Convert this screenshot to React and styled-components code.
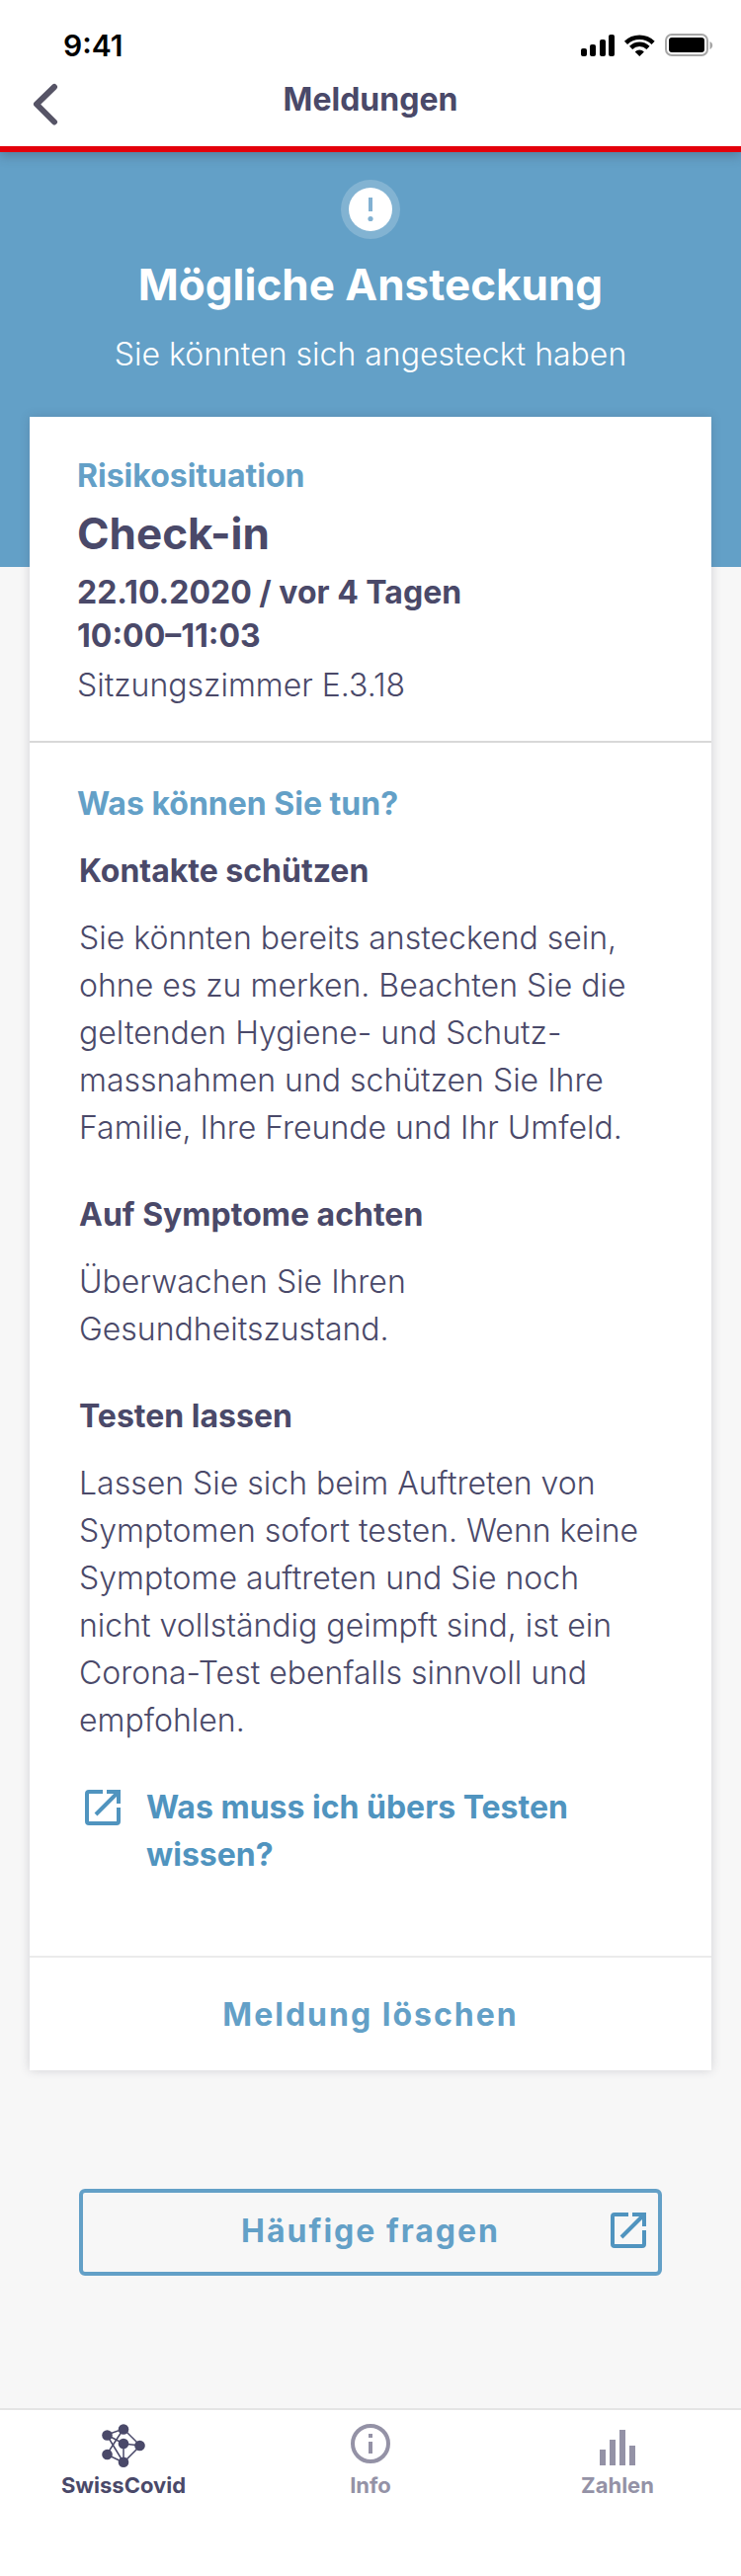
import React from "react";
import styled, { createGlobalStyle } from "styled-components";

const c = {
  ink: "#4a4969",
  muted: "#9492a6",
  blue: "#63a0c7",
  link: "#5094bf",
  red: "#e3000b",
  page: "#f7f7f7",
};

const Global = createGlobalStyle`
  * { box-sizing: border-box; }
  html, body, #root { min-height: 100%; }
  body {
    margin: 0;
    background: ${c.page};
    color: ${c.ink};
    font-family: Inter, "Liberation Sans", sans-serif;
    font-size: 32px;
  }
  h1, h2, h3, p { margin: 0; }
  button { font: inherit; background: none; border: 0; padding: 0; cursor: pointer; }
  a { text-decoration: none; color: inherit; }
  svg { display: block; flex: none; }
`;

const Page = styled.div`
  display: flex;
  flex-direction: column;
  min-height: 100vh;
`;

const Header = styled.header`
  position: relative;
  z-index: 1;
  background: #fff;
  border-bottom: 6px solid ${c.red};
  box-shadow: 0 4px 10px rgba(60, 60, 80, 0.35);
`;

const StatusBar = styled.div`
  display: flex;
  justify-content: space-between;
  align-items: center;
  height: 76px;
  padding: 16px 28px 0 64px;
`;

const Time = styled.time`
  color: #000;
  font-size: 30px;
  line-height: 36px;
  font-weight: 600;
`;

const StatusIcons = styled.div`
  display: flex;
  align-items: center;
`;

const NavBar = styled.div`
  display: grid;
  grid-template-columns: 1fr auto 1fr;
  height: 72px;
  padding: 0 32px;
`;

const BackButton = styled.button`
  justify-self: start;
  align-self: start;
  padding-top: 8px;
`;

const NavTitle = styled.h1`
  font-size: 32px;
  line-height: 50px;
  font-weight: 700;
`;

const Main = styled.main`
  flex: 1;
  display: flex;
  flex-direction: column;
  padding: 0 30px 134px;
  background: linear-gradient(${c.blue} 420px, ${c.page} 420px);
`;

const Hero = styled.section`
  display: flex;
  flex-direction: column;
  align-items: center;
  height: 268px;
  padding-top: 28px;
  color: #fff;
  text-align: center;
`;

const HeroTitle = styled.h2`
  margin-top: 20px;
  font-size: 44px;
  line-height: 52px;
  font-weight: 700;
`;

const HeroText = styled.p`
  margin-top: 20px;
  line-height: 50px;
  font-weight: 300;
`;

const Card = styled.article`
  background: #fff;
  box-shadow: 0 0 10px rgba(60, 60, 80, 0.2);
`;

const CardSection = styled.section`
  padding: ${(p) => (p.$soft ? "40px 48px 32px" : "38px 48px 32px")};
  border-bottom: 2px solid ${(p) => (p.$soft ? "#ebebeb" : "#d8d8d8")};
`;

const Eyebrow = styled.h2`
  color: ${c.blue};
  font-size: 32px;
  line-height: 44px;
  font-weight: 700;
`;

const EventTitle = styled.h3`
  margin: 8px 0 10px;
  font-size: 44px;
  line-height: 56px;
  font-weight: 700;
`;

const EventTime = styled.p`
  line-height: 44px;
  font-weight: 700;
`;

const EventPlace = styled.p`
  margin-top: 4px;
  line-height: 48px;
  font-weight: 300;
`;

const Advice = styled.div`
  padding: 0 16px 0 2px;
  margin-top: ${(p) => (p.$first ? 22 : 40)}px;
`;

const AdviceTitle = styled.h3`
  font-size: 32px;
  line-height: 48px;
  font-weight: 700;
`;

const AdviceText = styled.p`
  margin-top: 20px;
  line-height: 48px;
  font-weight: 300;
`;

const TestLink = styled.a`
  display: flex;
  align-items: flex-start;
  gap: 26px;
  padding: 0 8px;
  margin: 40px 0 46px;
  color: ${c.link};
  line-height: 48px;
  font-weight: 700;

  svg { margin-top: 6px; }
`;

const DeleteButton = styled.button`
  display: block;
  width: 100%;
  padding: 34px 0 32px;
  color: ${c.blue};
  line-height: 48px;
  font-weight: 700;
  letter-spacing: 2px;
`;

const FaqButton = styled.a`
  display: grid;
  grid-template-columns: 1fr auto 1fr;
  align-items: center;
  height: 88px;
  margin: 120px 50px 0;
  padding: 0 12px 4px;
  border: 4px solid ${c.blue};
  border-radius: 6px;
  color: ${c.blue};
  font-weight: 700;
  letter-spacing: 2px;

  svg { grid-column: 3; justify-self: end; color: ${c.link}; }
  span { grid-column: 2; }
`;

const TabBar = styled.nav`
  display: grid;
  grid-template-columns: repeat(3, 1fr);
  height: 170px;
  padding-top: 12px;
  background: #fff;
  border-top: 2px solid #e5e5e5;
`;

const Tab = styled.a`
  display: flex;
  flex-direction: column;
  align-items: center;
  color: ${(p) => (p.$active ? c.ink : c.muted)};
  font-size: 22px;
  line-height: 32px;
  font-weight: 700;
`;

const TabIcon = styled.span`
  display: flex;
  align-items: center;
  height: 48px;
`;

const Signal = () => (
  <svg width="34" height="22" viewBox="0 0 34 22" aria-hidden="true">
    <rect x="0" y="14" width="6" height="8" rx="2" />
    <rect x="9" y="10" width="6" height="12" rx="2" />
    <rect x="19" y="5" width="6" height="17" rx="2" />
    <rect x="28" y="0" width="6" height="22" rx="2" />
  </svg>
);

const Wifi = () => (
  <svg width="51" height="22" viewBox="0 0 51 22" aria-hidden="true">
    <g fill="none" stroke="#000" strokeWidth="4.4">
      <path d="M11.5 8.4a19.5 19.5 0 0 1 27.6 0" />
      <path d="M16.6 13.4a12.3 12.3 0 0 1 17.4 0" />
    </g>
    <path d="M25.3 22l-4.6-4.6a6.5 6.5 0 0 1 9.2 0z" />
  </svg>
);

const Battery = () => (
  <svg width="49" height="24" viewBox="0 0 49 24" aria-hidden="true">
    <rect x="1" y="1" width="42" height="21" rx="6" fill="none" stroke="#a6a6a6" strokeWidth="2" />
    <rect x="4" y="4" width="36" height="15" rx="3" />
    <path d="M45.500 8v8c1.600-.7 2.700-2.300 2.700-4s-1.100-3.300-2.700-4z" fill="#a6a6a6" />
  </svg>
);

const Chevron = () => (
  <svg width="28" height="44" viewBox="0 0 28 44" aria-hidden="true">
    <path d="M23 4L5 21.500 23 39.500" fill="none" stroke="#565466" strokeWidth="6" strokeLinecap="round" strokeLinejoin="round" />
  </svg>
);

const Alert = () => (
  <svg width="60" height="60" viewBox="0 0 60 60" aria-hidden="true">
    <circle cx="30" cy="30" r="30" fill="#fff" fillOpacity=".2" />
    <circle cx="30" cy="30" r="22" fill="#fff" />
    <rect x="28" y="18" width="4" height="14" fill="#82b1d2" />
    <circle cx="30" cy="39.500" r="2.600" fill="#82b1d2" />
  </svg>
);

const External = () => (
  <svg width="36" height="36" viewBox="0 0 36 36" aria-hidden="true">
    <path d="M18 2H4a2 2 0 0 0-2 2v28a2 2 0 0 0 2 2h28a2 2 0 0 0 2-2V18M22 2h12v12M33 3L11 25" fill="none" stroke="currentColor" strokeWidth="4" />
  </svg>
);

const Network = () => (
  <svg width="44" height="44" viewBox="0 0 44 44" aria-hidden="true">
    <path d="M5 11L22 5 39 22 22 39 5 31 22 5M5 11L22 39V20L5 11M22 20l17 2" fill="none" stroke="currentColor" strokeWidth="1.500" />
    <g fill="currentColor">
      <circle cx="22" cy="5.500" r="5.300" />
      <circle cx="5.500" cy="11.500" r="5.300" />
      <circle cx="22" cy="20" r="5.300" />
      <circle cx="38.500" cy="22" r="5.300" />
      <circle cx="5.500" cy="31" r="5.300" />
      <circle cx="22" cy="38.700" r="5.300" />
    </g>
  </svg>
);

const Info = () => (
  <svg width="40" height="44" viewBox="0 0 40 44" aria-hidden="true">
    <circle cx="20" cy="20" r="18" fill="none" stroke="currentColor" strokeWidth="4" />
    <path d="M18 10h4v4h-4zM18 18h4v12h-4z" fill="currentColor" />
  </svg>
);

const Chart = () => (
  <svg width="36" height="40" viewBox="0 -4 36 40" aria-hidden="true">
    <path d="M0 20h6v16H0zM10 10h6v26h-6zM20 0h6v36h-6zM30 16h6v20h-6z" fill="currentColor" />
  </svg>
);

const tabs = [
  { label: "SwissCovid", Icon: Network, active: true },
  { label: "Info", Icon: Info },
  { label: "Zahlen", Icon: Chart },
];

export default function App() {
  return (
    <Page>
      <Global />
      <Header>
        <StatusBar>
          <Time>9:41</Time>
          <StatusIcons>
            <Signal />
            <Wifi />
            <Battery />
          </StatusIcons>
        </StatusBar>
        <NavBar>
          <BackButton aria-label="Zurück"><Chevron /></BackButton>
          <NavTitle>Meldungen</NavTitle>
        </NavBar>
      </Header>
      <Main>
        <Hero>
          <Alert />
          <HeroTitle>Mögliche Ansteckung</HeroTitle>
          <HeroText>Sie könnten sich angesteckt haben</HeroText>
        </Hero>
        <Card>
          <CardSection>
            <Eyebrow>Risikosituation</Eyebrow>
            <EventTitle>Check-in</EventTitle>
            <EventTime>22.10.2020 / vor 4 Tagen<br />10:00–11:03</EventTime>
            <EventPlace>Sitzungszimmer E.3.18</EventPlace>
          </CardSection>
          <CardSection $soft>
            <Eyebrow>Was können Sie tun?</Eyebrow>
            <Advice $first>
              <AdviceTitle>Kontakte schützen</AdviceTitle>
              <AdviceText>
                Sie könnten bereits ansteckend sein, ohne es zu merken. Beachten Sie die
                geltenden Hygiene- und Schutz-<br />massnahmen und schützen Sie Ihre
                Familie, Ihre Freunde und Ihr Umfeld.
              </AdviceText>
            </Advice>
            <Advice>
              <AdviceTitle>Auf Symptome achten</AdviceTitle>
              <AdviceText>Überwachen Sie Ihren Gesundheitszustand.</AdviceText>
            </Advice>
            <Advice>
              <AdviceTitle>Testen lassen</AdviceTitle>
              <AdviceText>
                Lassen Sie sich beim Auftreten von Symptomen sofort testen. Wenn keine
                Symptome auftreten und Sie noch nicht vollständig geimpft sind, ist ein
                Corona-Test ebenfalls sinnvoll und empfohlen.
              </AdviceText>
            </Advice>
            <TestLink href="#testen">
              <External />
              <span>Was muss ich übers Testen wissen?</span>
            </TestLink>
          </CardSection>
          <DeleteButton type="button">Meldung löschen</DeleteButton>
        </Card>
        <FaqButton href="#faq">
          <span>Häufige fragen</span>
          <External />
        </FaqButton>
      </Main>
      <TabBar>
        {tabs.map(({ label, Icon, active }) => (
          <Tab key={label} href={"#" + label.toLowerCase()} $active={active}>
            <TabIcon><Icon /></TabIcon>
            {label}
          </Tab>
        ))}
      </TabBar>
    </Page>
  );
}
